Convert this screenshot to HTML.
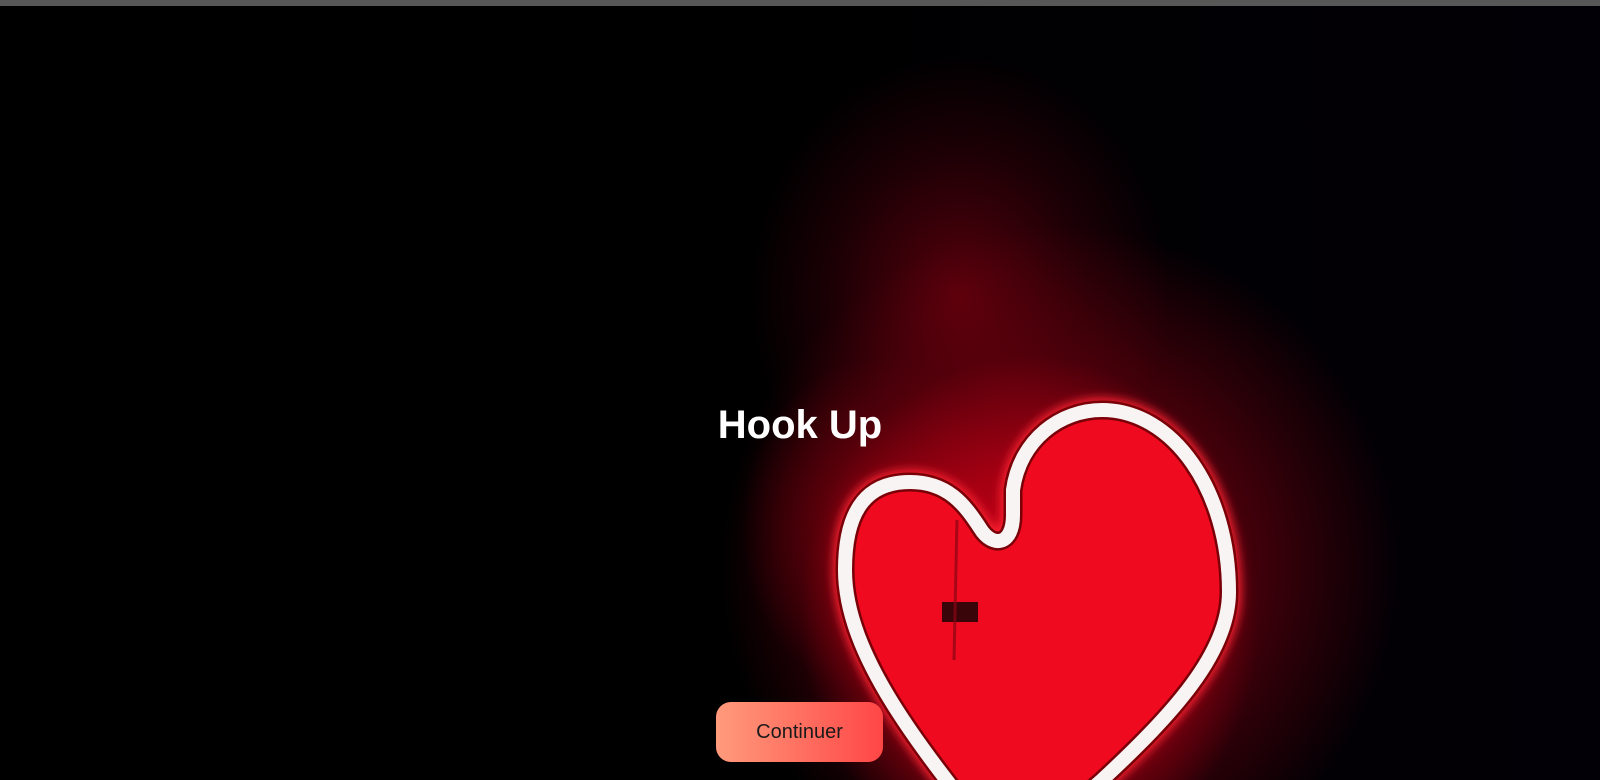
<!DOCTYPE html>
<html><head><meta charset="utf-8"><style>
html,body{margin:0;padding:0;width:1600px;height:780px;overflow:hidden;background:#000;font-family:"Liberation Sans",Arial,sans-serif}
.bar{position:absolute;left:0;top:0;width:1600px;height:6px;background:#575757}
.bg{position:absolute;left:0;top:6px;width:1600px;height:774px;overflow:hidden;
background:
radial-gradient(ellipse 230px 260px at 1030px 610px, rgba(225,0,25,0.95), rgba(190,0,20,0.7) 55%, rgba(0,0,0,0) 100%),
radial-gradient(ellipse 340px 340px at 1060px 560px, rgba(160,0,20,0.85), rgba(120,0,15,0.5) 60%, rgba(0,0,0,0) 100%),
radial-gradient(ellipse 210px 240px at 960px 290px, rgba(110,0,14,0.8), rgba(70,0,10,0.4) 60%, rgba(0,0,0,0) 100%),
radial-gradient(ellipse 140px 170px at 880px 520px, rgba(170,0,15,0.75), rgba(0,0,0,0) 100%),
linear-gradient(90deg,#000 0%,#000 45%,#020006 100%)}
h1{position:absolute;left:0;width:1600px;top:401px;margin:0;text-align:center;color:#fff;font-size:40px;font-weight:bold;line-height:48px}
.btn{position:absolute;left:716px;top:702px;width:167px;height:60px;border-radius:15px;background:linear-gradient(90deg,#ff9b7c,#ff4646);color:#1a1a1a;font-size:20px;text-align:center;line-height:60px}
svg{position:absolute;left:0;top:0}
</style></head><body>
<div class="bg"></div>
<svg width="1600" height="780" viewBox="0 0 1600 780">
<defs><filter id="g"><feGaussianBlur stdDeviation="5"/></filter>
<path id="h" d="M980,528 C992,548 1013,546 1013,515 L1013,490 C1020,439 1061,410 1102,410 C1173,410 1229,490 1229,592 C1229,653 1173,714 1102,780 L1010,860 C930,760 845,660 845,570 C845,520 860,482 910,482 C948,482 965,505 980,528Z"/></defs>
<use href="#h" fill="#ee0a20" stroke="#ff2030" stroke-width="24" filter="url(#g)"/>
<use href="#h" fill="#ef0a20" stroke="#7a0008" stroke-width="19"/>
<use href="#h" fill="none" stroke="#f8f4f4" stroke-width="14"/>
<rect x="942" y="602" width="36" height="20" fill="#3a0508"/>
<line x1="957" y1="520" x2="954" y2="660" stroke="#8a0514" stroke-width="3" opacity="0.7"/>
</svg>
<div class="bar"></div>
<h1>Hook Up</h1>
<div class="btn">Continuer</div>
</body></html>
